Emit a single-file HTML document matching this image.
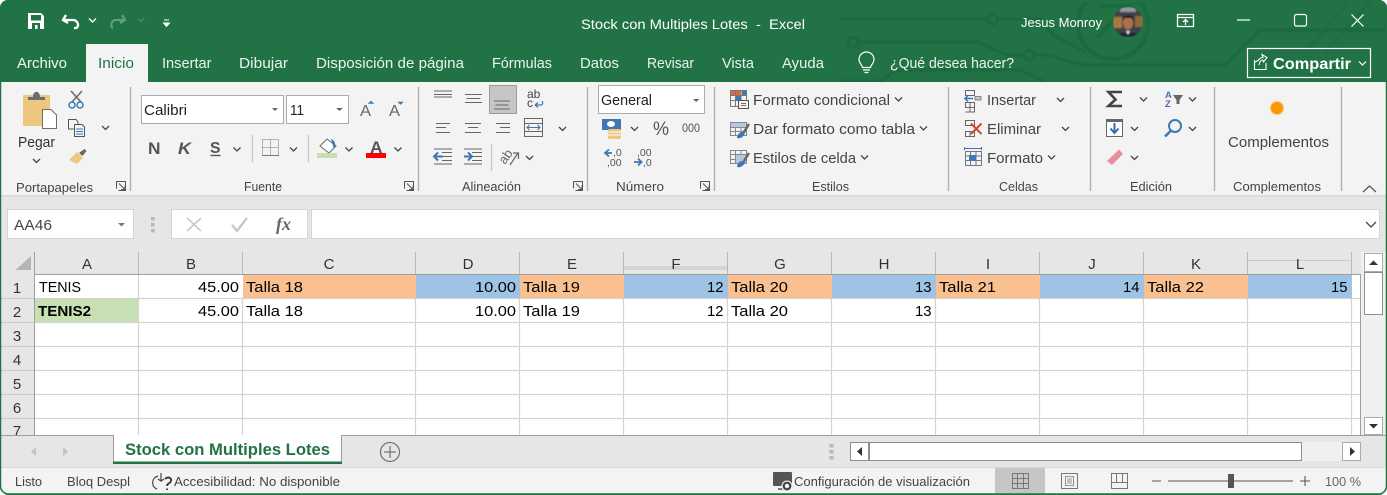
<!DOCTYPE html>
<html lang="es"><head><meta charset="utf-8"><title>Stock con Multiples Lotes - Excel</title>
<style>
html,body{margin:0;padding:0;background:#fff;width:1387px;height:495px;overflow:hidden}
svg{display:block;position:absolute;left:0;top:0}
text{font-family:"Liberation Sans",sans-serif;font-size:14px;fill:#333}
.w{fill:#fff}
.t{fill:#eaf3ee;font-size:14.7px}
.b{fill:#444;font-size:14.7px}
.g{fill:#444;font-size:13px}
.c{fill:#000;font-size:14.5px}
.h{fill:#333;font-size:15px;text-anchor:middle}
.s{fill:#444;font-size:13px}
.chev{fill:none;stroke:#444;stroke-width:1.3}
.sep{stroke:#b1b1b1;stroke-width:1.4}
.l{stroke:#666;stroke-width:1;fill:none}
.gl{stroke:#d4d4d4;stroke-width:1.2}
</style></head><body>
<svg width="1387" height="495" viewBox="0 0 1387 495" xmlns="http://www.w3.org/2000/svg">
<defs><clipPath id="win"><rect x="0" y="0" width="1387" height="495" rx="8"/></clipPath>
<clipPath id="av"><circle cx="1128" cy="22" r="15"/></clipPath>
<clipPath id="tb"><rect width="1387" height="82"/></clipPath>
<filter id="bl"><feGaussianBlur stdDeviation=".7"/></filter>
<filter id="bl2"><feGaussianBlur stdDeviation=".6"/></filter></defs>
<g clip-path="url(#win)">
<rect width="1387" height="495" fill="#217346"/>
<g clip-path="url(#tb)" fill="none" stroke="#1d6a40" stroke-width="3.200">
<path d="M840 19H988M998 19H1040L1053 35 1085 52M858 42H977L1007 55H1024M1034 55H1047L1083 65H1225L1260 30H1387M840 81H882L895 70H1020L1045 82"/>
<circle cx="993" cy="19" r="5"/><circle cx="853" cy="42" r="5"/><circle cx="1029" cy="55" r="5"/>
<circle cx="1113" cy="24" r="35" stroke-width="4.500"/><path d="M1100 6H1128L1098 37" stroke-width="4.500"/>
<path d="M1307 50 1350 0M1325 52 1372 0" opacity=".6"/>
</g>
<!-- quick access -->
<path d="M28 13H41L44 16V29H28Z" fill="#fff"/><rect x="31" y="15" width="10" height="5.500" fill="#217346"/><rect x="32" y="23" width="8" height="6" fill="#217346"/><rect x="35" y="25" width="2.500" height="4" fill="#fff"/>
<path d="M66 15 63 20 68 23M64 20H73C79 20 80 29 74 28" fill="none" stroke="#fff" stroke-width="2.300"/>
<path d="M89 18.500 92.500 22 96 18.500" fill="none" stroke="#fff" stroke-width="1.300"/>
<path d="M122 15 125 20 120 23M124 20H116C111 20 110 27 113 28" fill="none" stroke="#5f9d7c" stroke-width="2.300"/>
<path d="M138 18.500 141 21.500 144 18.500" fill="none" stroke="#4f9170" stroke-width="1.200"/>
<path d="M164 20H169M163.500 23H169.500L166.500 26.500Z" fill="#fff" stroke="#fff" stroke-width="1"/>
<text x="581" y="29" style="fill:#fff;font-size:13.500px" textLength="224" lengthAdjust="spacingAndGlyphs" xml:space="preserve">Stock con Multiples Lotes  -  Excel</text>
<text x="1021" y="27" style="fill:#fff;font-size:13px" textLength="81" lengthAdjust="spacingAndGlyphs">Jesus Monroy</text>
<g clip-path="url(#av)"><g filter="url(#bl)"><rect x="1113" y="7" width="30" height="30" fill="#3f4046"/><rect x="1113" y="17" width="9" height="11" fill="#a67c3e"/><rect x="1135" y="16" width="8" height="11" fill="#8f6a38"/><rect x="1120" y="7" width="16" height="5" fill="#8d98a3"/><ellipse cx="1128" cy="23" rx="5" ry="6.500" fill="#a9724e"/><path d="M1122 20C1122 14 1134 14 1134 20L1132 18H1124Z" fill="#151316"/><path d="M1116 37C1117 31 1139 31 1140 37Z" fill="#1a2338"/><path d="M1126 31H1130L1128 35Z" fill="#dfe3ea"/></g></g>
<path d="M1177.500 14.500H1193.500V26.500H1177.500ZM1177.500 17.500H1193.500" fill="none" stroke="#fff" stroke-width="1.300"/><path d="M1185.500 25V19.500M1183 22 1185.500 19.500 1188 22" fill="none" stroke="#fff" stroke-width="1.300"/>
<path d="M1237 20H1250" stroke="#fff" stroke-width="1.200"/>
<rect x="1294.500" y="14.500" width="12" height="11.500" rx="2" fill="none" stroke="#fff" stroke-width="1.200"/>
<path d="M1351.500 14.500 1363.500 26.500M1363.500 14.500 1351.500 26.500" stroke="#fff" stroke-width="1.200"/>
<!-- tabs -->
<rect x="86" y="44" width="62" height="38" fill="#f3f3f3"/>
<text x="17" y="68" class="t" style="fill:#f0f6f2" textLength="50" lengthAdjust="spacingAndGlyphs">Archivo</text>
<text x="98" y="68" class="t" style="fill:#217346" textLength="36" lengthAdjust="spacingAndGlyphs">Inicio</text>
<text x="162" y="68" class="t" textLength="49.500" lengthAdjust="spacingAndGlyphs">Insertar</text>
<text x="239" y="68" class="t" textLength="49" lengthAdjust="spacingAndGlyphs">Dibujar</text>
<text x="316" y="68" class="t" textLength="148" lengthAdjust="spacingAndGlyphs">Disposición de página</text>
<text x="492" y="68" class="t" textLength="60" lengthAdjust="spacingAndGlyphs">Fórmulas</text>
<text x="580" y="68" class="t" textLength="39" lengthAdjust="spacingAndGlyphs">Datos</text>
<text x="647" y="68" class="t" textLength="47" lengthAdjust="spacingAndGlyphs">Revisar</text>
<text x="722" y="68" class="t" textLength="32" lengthAdjust="spacingAndGlyphs">Vista</text>
<text x="782" y="68" class="t" textLength="42" lengthAdjust="spacingAndGlyphs">Ayuda</text>
<text x="890" y="68" class="t" textLength="124" lengthAdjust="spacingAndGlyphs">¿Qué desea hacer?</text>
<path d="M862.500 67.500C861.500 64 859 63 859 59.500A7.500 7.500 0 0 1 874 59.500C874 63 871.500 64 870.500 67.500ZM863 70H870M864.500 72.500H868.500" fill="none" stroke="#fff" stroke-width="1.200"/>
<rect x="1247.500" y="48.500" width="123" height="29" fill="none" stroke="#fff" stroke-width="1.200"/>
<path d="M1254.500 60V69.500H1266V63M1254.500 62.500 1258 60.500C1260 58 1262 57.500 1263 57.500L1262 54.500 1267 57.500 1263.500 62 1263 60C1261 60 1259.500 62 1259 65" fill="none" stroke="#fff" stroke-width="1.100"/>
<text x="1273" y="69" style="fill:#fff;font-size:16px;font-weight:700" textLength="78" lengthAdjust="spacingAndGlyphs">Compartir</text>
<path d="M1359 61.500 1362.500 65 1366 61.500" fill="none" stroke="#fff" stroke-width="1.200"/>

<!-- ribbon -->
<rect x="1" y="82" width="1385" height="114" fill="#f3f3f3"/>
<rect x="1" y="195" width="1385" height="2" fill="#dcdcdc"/>
<rect x="1" y="197" width="1385" height="238" fill="#e6e6e6"/>
<g class="sep"><path d="M130.500 87V191M418.500 87V191M587.500 87V191M714.500 87V191M948.500 87V191M1090.500 87V191M1214.500 87V191M1341.500 87V191"/></g>
<path d="M252.500 135V162M308.500 135V162M491.500 144V171" stroke="#c9c9c9" stroke-width="1.300"/>

<!-- clipboard -->
<rect x="23" y="95" width="27" height="31" rx="1" fill="#eec77f"/><path d="M28 97H33C33 90 40 90 40 97H45V100H28Z" fill="#6d6d6d"/>
<path d="M42.500 109.500H51L56.500 115V128.500H42.500Z" fill="#fff" stroke="#6d6d6d"/>
<text x="18" y="147" class="b" style="fill:#333;font-size:15px" textLength="37" lengthAdjust="spacingAndGlyphs">Pegar</text>
<path d="M33 159 36.500 162.500 40 159" class="chev"/>
<path d="M71 91 81 102M82 91 72 102" stroke="#6b6b6b" stroke-width="1.600" fill="none"/><circle cx="72" cy="105" r="3" fill="none" stroke="#3d78b4" stroke-width="1.500"/><circle cx="80" cy="105" r="3" fill="none" stroke="#3d78b4" stroke-width="1.500"/>
<path d="M68.500 119.500H76L78 122V129H68.500Z" fill="#f3f3f3" stroke="#555"/><path d="M74.500 124.500H82L84.500 127V136.500H74.500Z" fill="#f3f3f3" stroke="#555"/><path d="M76 129H83M76 131.500H83M76 134H83" stroke="#3d78b4"/>
<path d="M102 126 105.500 129.500 109 126" class="chev"/>
<path d="M69 160 77 152 83 158 77 164Z" fill="#eec77f"/><path d="M79 153 84.500 149 86.500 151 82.500 156Z" fill="#666"/>
<text x="16" y="192" class="g" textLength="77" lengthAdjust="spacingAndGlyphs">Portapapeles</text>
<path d="M116.500 188.500V181.500H125.500V190.500H118.500M119 183.500 125 189.500M121 189.500H125V185.500" fill="none" stroke="#555"/>

<!-- font -->
<rect x="141.500" y="95.500" width="142" height="28" fill="#fff" stroke="#ababab"/>
<rect x="286.500" y="95.500" width="62" height="28" fill="#fff" stroke="#ababab"/>
<text x="144" y="115" style="fill:#222;font-size:15px" textLength="43" lengthAdjust="spacingAndGlyphs">Calibri</text>
<text x="290" y="115" style="fill:#222;font-size:15px" textLength="14" lengthAdjust="spacingAndGlyphs">11</text>
<path d="M272 108H278L275 111ZM336 108H343L339.500 111Z" fill="#666"/>
<text x="360" y="116" style="fill:#666;font-size:16px" textLength="11" lengthAdjust="spacingAndGlyphs">A</text><path d="M368.500 103.500 371 101 373.500 103.500Z" fill="#3d78b4" stroke="#3d78b4" stroke-width=".6"/>
<text x="389" y="116" style="fill:#666;font-size:16px" textLength="11" lengthAdjust="spacingAndGlyphs">A</text><path d="M398 102H403L400.500 104.500Z" fill="#3d78b4" stroke="#3d78b4" stroke-width=".6"/>
<text x="148" y="154" style="fill:#555;font-size:17px;font-weight:700" textLength="12.500" lengthAdjust="spacingAndGlyphs">N</text>
<text x="178" y="154" style="fill:#555;font-size:17px;font-weight:700;font-style:italic" textLength="13" lengthAdjust="spacingAndGlyphs">K</text>
<text x="210" y="153" style="fill:#555;font-size:16px;font-weight:700" textLength="10.500" lengthAdjust="spacingAndGlyphs">S</text><path d="M210.500 155.500H220.500" stroke="#555" stroke-width="1.400"/>
<path d="M233.500 147.500 237 151 240.500 147.500M290 147.500 293.500 151 297 147.500M345.500 147.500 349 151 352.500 147.500M394.500 147.500 398 151 401.500 147.500" class="chev"/>
<path d="M262.500 139.500H278.500M262.500 139.500V155.500M278.500 139.500V155.500M262.500 147.500H278.500M270.500 139.500V155.500" fill="none" stroke="#777" stroke-width="1" stroke-dasharray="1 1"/><path d="M262 155.500H279" stroke="#777" stroke-width="1"/>
<path d="M320 146 327 139 336 146 329 153Z" fill="#fff" stroke="#666"/><path d="M331 139C336 141 336 146 334 149Z" fill="#3d78b4"/>
<rect x="317" y="153" width="20" height="5" fill="#c6e0b4"/>
<text x="370" y="153" style="fill:#555;font-size:17px;font-weight:700" textLength="12.500" lengthAdjust="spacingAndGlyphs">A</text>
<rect x="366" y="153" width="20" height="5" fill="#fe0000"/>
<text x="244" y="191" class="g" textLength="38" lengthAdjust="spacingAndGlyphs">Fuente</text>
<path d="M404.500 188.500V181.500H413.500V190.500H406.500M407 183.500 413 189.500M409 189.500H413V185.500" fill="none" stroke="#555"/>

<!-- alignment -->
<rect x="489.500" y="85.500" width="27" height="28" fill="#c6c6c6" stroke="#9c9c9c"/>
<g class="l"><path d="M434 91H452M434 94.500H452M434 97H452"/><path d="M465 94.500H482M466.500 98.500H480.500M465 102.500H482"/><path d="M494 101H510M495.500 105H508.500M494 109H510"/>
<path d="M436 123.500H450M436 127.500H446M436 132.500H450"/>
<path d="M465 123.500H481M468 127.500H478M465 132.500H481"/><path d="M496 123.500H510M500 127.500H510M496 132.500H510"/>
</g>
<text x="527" y="98" style="fill:#444;font-size:12px">ab</text><text x="527" y="107" style="fill:#444;font-size:12px">c</text><path d="M535 105H541C543 105 543 102 542 101M535 105 538 102.500M535 105 538 107.500" fill="none" stroke="#3d78b4" stroke-width="1.200"/>
<path d="M524.500 118.500H542.500V136.500H524.500ZM524.500 123.500H542.500M524.500 131.500H542.500" fill="none" stroke="#666"/><path d="M527 127.500H540M529.500 125 527 127.500 529.500 130M537.500 125 540 127.500 537.500 130" fill="none" stroke="#3d78b4" stroke-width="1.100"/>
<path d="M559 127 562.500 130.500 566 127M526 156 529.500 159.500 533 156" class="chev"/>
<path d="M442 152.500H452M442 156.500H452M442 160.500H452M434 164H452M434 149H452" class="l"/><path d="M434 156.500H443M438 152.500 434 156.500 438 160.500" fill="none" stroke="#3d78b4" stroke-width="2"/>
<path d="M472 152.500H482M472 156.500H482M472 160.500H482M464 164H482M464 149H482" class="l"/><path d="M464 156.500H472M468 152.500 472 156.500 468 160.500" fill="none" stroke="#3d78b4" stroke-width="2"/>
<text transform="translate(505 165) rotate(-55)" style="fill:#666;font-size:13px">ab</text><path d="M510 165 518 153M513 153H518.500V159" fill="none" stroke="#666" stroke-width="1.200"/>
<text x="462" y="191" class="g" textLength="59" lengthAdjust="spacingAndGlyphs">Alineación</text>
<path d="M573.500 188.500V181.500H582.500V190.500H575.500M576 183.500 582 189.500M578 189.500H582V185.500" fill="none" stroke="#555"/>

<!-- number -->
<rect x="598.500" y="85.500" width="106" height="28" fill="#fff" stroke="#ababab"/>
<text x="601" y="105" style="fill:#222;font-size:14.700px" textLength="51" lengthAdjust="spacingAndGlyphs">General</text>
<path d="M693 99H699.500L696.200 102Z" fill="#666"/>
<rect x="602" y="119" width="19" height="11" fill="#3d78b4"/><ellipse cx="611" cy="124" rx="4" ry="3" fill="#fff"/><rect x="608" y="129" width="13" height="10" rx="2" fill="#eec77f"/><path d="M608 132H621M608 135H621" stroke="#fff"/>
<path d="M631 127 634.500 130.500 638 127" class="chev"/>
<text x="653" y="135" style="fill:#555;font-size:19px" textLength="16" lengthAdjust="spacingAndGlyphs">%</text>
<text x="682" y="132" style="fill:#555;font-size:12px" textLength="18" lengthAdjust="spacingAndGlyphs">000</text>
<path d="M605 153H612M609 149.500 605 153 609 156.500" fill="none" stroke="#3d78b4" stroke-width="1.800"/>
<text x="613" y="156" style="fill:#555;font-size:10.500px">,0</text><text x="607" y="166" style="fill:#555;font-size:10.500px">,00</text>
<path d="M634 162H641M638 158.500 641.500 162 638 165.500" fill="none" stroke="#3d78b4" stroke-width="1.800"/>
<text x="637" y="156" style="fill:#555;font-size:10.500px">,00</text><text x="643" y="166" style="fill:#555;font-size:10.500px">,0</text>
<text x="616" y="191" class="g" textLength="48" lengthAdjust="spacingAndGlyphs">Número</text>
<path d="M700.500 188.500V181.500H709.500V190.500H702.500M703 183.500 709 189.500M705 189.500H709V185.500" fill="none" stroke="#555"/>

<!-- styles -->
<path d="M730.500 90.500H746.500V106.500H730.500ZM730.500 95.500H746.500M730.500 100.500H746.500M735.500 90.500V106.500M741 90.500V106.500" fill="none" stroke="#777"/>
<rect x="736" y="96" width="5" height="4" fill="#3d78b4"/><rect x="731" y="91" width="4" height="4" fill="#e0683c"/><rect x="736" y="91" width="5" height="4" fill="#e0683c"/><rect x="742" y="91" width="4" height="4" fill="#3d78b4"/>
<rect x="738.500" y="100.500" width="10" height="8" fill="#f3f3f3" stroke="#555"/><path d="M741 103.500H746M741 105.500H746" stroke="#444" stroke-width=".8"/>
<text x="753" y="105" class="b" textLength="137" lengthAdjust="spacingAndGlyphs">Formato condicional</text>
<path d="M895 97.500 898.500 101 902 97.500" class="chev"/>
<path d="M730.500 122.500H746.500V135.500H730.500ZM730.500 127.500H746.500M730.500 131.500H746.500M735.500 122.500V135.500M741 122.500V135.500" fill="none" stroke="#888"/><rect x="731" y="123" width="15" height="4" fill="#b4c8e0"/>
<path d="M744 132 749 124" stroke="#666" stroke-width="2.500"/><path d="M737 138C737 134 741 131 745 132 745 136 741 139 737 138Z" fill="#3d78b4"/>
<text x="753" y="134" class="b" textLength="162" lengthAdjust="spacingAndGlyphs">Dar formato como tabla</text>
<path d="M920 126.500 923.500 130 927 126.500" class="chev"/>
<path d="M730.500 150.500H746.500V163.500H730.500ZM730.500 154.500H746.500M730.500 159.500H746.500M735.500 150.500V163.500M741 150.500V163.500" fill="none" stroke="#888"/><rect x="736" y="155" width="10" height="8" fill="#b4c8e0"/>
<path d="M744 161 749 153" stroke="#666" stroke-width="2.500"/><path d="M737 167C737 163 741 160 745 161 745 165 741 168 737 167Z" fill="#3d78b4"/>
<text x="753" y="163" class="b" textLength="103" lengthAdjust="spacingAndGlyphs">Estilos de celda</text>
<path d="M861 155.500 864.500 159 868 155.500" class="chev"/>
<text x="812" y="191" class="g" textLength="37" lengthAdjust="spacingAndGlyphs">Estilos</text>

<!-- cells -->
<path d="M965.500 90.500H974.500V95.500H965.500ZM965.500 102.500H974.500V107.500H965.500ZM965.500 107.500H974.500V112H965.500M970 102.500V112" fill="none" stroke="#666"/><rect x="975" y="96.500" width="6" height="3.500" fill="#b4c8e0" stroke="#666" stroke-width=".7"/><path d="M965 98.500H973M968 95.500 965 98.500 968 101.500" fill="none" stroke="#3d78b4" stroke-width="1.500"/>
<text x="987" y="105" class="b" textLength="49" lengthAdjust="spacingAndGlyphs">Insertar</text>
<path d="M1057 98 1060.500 101.500 1064 98" class="chev"/>
<path d="M965.500 120.500H974.500V125.500H965.500ZM965.500 131.500H974.500V136.500H965.500ZM970 131.500V136.500" fill="none" stroke="#666"/><path d="M971 123.500 981.500 134M981.500 123.500 971 134" stroke="#d24726" stroke-width="2"/>
<text x="987" y="134" class="b" textLength="54" lengthAdjust="spacingAndGlyphs">Eliminar</text>
<path d="M1062 127 1065.500 130.500 1069 127" class="chev"/>
<path d="M965.500 151.500H981.500V165.500H965.500ZM965.500 156H981.500M965.500 160.500H981.500M970.500 151.500V165.500M976 151.500V165.500" fill="none" stroke="#777"/><rect x="969" y="155" width="7" height="6" fill="#3d78b4"/><path d="M964.500 148.500H981.500M964.500 147V150M981.500 147V150" stroke="#3d78b4"/>
<text x="987" y="163" class="b" textLength="56" lengthAdjust="spacingAndGlyphs">Formato</text>
<path d="M1048 155.500 1051.500 159 1055 155.500" class="chev"/>
<text x="999" y="191" class="g" textLength="39" lengthAdjust="spacingAndGlyphs">Celdas</text>

<!-- editing -->
<path d="M1122 92H1108.500L1115.500 99.500 1108.500 106H1122" fill="none" stroke="#444" stroke-width="2.600"/>
<path d="M1140 97.500 1143.500 101 1147 97.500M1189 97.500 1192.500 101 1196 97.500M1131 127 1134.500 130.500 1138 127M1189 127 1192.500 130.500 1196 127M1131 156 1134.500 159.500 1138 156" class="chev"/>
<text x="1165" y="98" style="fill:#3d78b4;font-size:9.500px;font-weight:700">A</text><text x="1165" y="107" style="fill:#7c4db0;font-size:9.500px;font-weight:700">Z</text><path d="M1173 95H1183L1179.500 100V104H1176.500V100Z" fill="#666"/>
<rect x="1106.500" y="119.500" width="16" height="17" fill="#fff" stroke="#666"/><rect x="1106" y="119" width="17" height="3" fill="#666"/><path d="M1114.500 123V133M1110.500 128.500 1114.500 133 1118.500 128.500" fill="none" stroke="#2f6db3" stroke-width="2"/>
<circle cx="1175" cy="126" r="6" fill="none" stroke="#3d78b4" stroke-width="2"/><path d="M1170.500 131 1165 136.500" stroke="#3d78b4" stroke-width="2.500"/>
<path d="M1107 161 1119 149.500 1123 154 1112 165Z" fill="#e88ea0"/>
<text x="1130" y="191" class="g" textLength="42" lengthAdjust="spacingAndGlyphs">Edición</text>

<!-- addins -->
<circle cx="1277" cy="108" r="6.500" fill="#fb9806" filter="url(#bl2)"/>
<text x="1228" y="147" class="b" textLength="101" lengthAdjust="spacingAndGlyphs">Complementos</text>
<text x="1233" y="191" class="g" textLength="88" lengthAdjust="spacingAndGlyphs">Complementos</text>
<path d="M1363 192 1369.500 186 1376 192" fill="none" stroke="#555" stroke-width="1.200"/>

<!-- formula bar -->
<rect x="7.500" y="209.500" width="126" height="29" fill="#fff" stroke="#d6d6d6"/>
<text x="14" y="230" style="fill:#444;font-size:15px" textLength="38" lengthAdjust="spacingAndGlyphs">AA46</text>
<path d="M118 223H125L121.500 226.500Z" fill="#777"/>
<rect x="151" y="217" width="3.500" height="3.500" fill="#b5b5b5"/><rect x="151" y="223" width="3.500" height="3.500" fill="#b5b5b5"/><rect x="151" y="229" width="3.500" height="3.500" fill="#b5b5b5"/>
<rect x="171.500" y="209.500" width="136" height="29" fill="#fff" stroke="#d6d6d6"/>
<rect x="311.500" y="209.500" width="1068" height="29" fill="#fff" stroke="#d6d6d6"/>
<path d="M187 218 201 231M201 218 187 231" stroke="#c8c8c8" stroke-width="1.600"/>
<path d="M232 225 237 231 247 218" fill="none" stroke="#c8c8c8" stroke-width="2.400"/>
<text x="276" y="230" style="fill:#666;font-size:18px;font-family:'Liberation Serif',serif;font-style:italic;font-weight:700">fx</text>
<path d="M1366 222 1371 227 1376 222" fill="none" stroke="#444" stroke-width="1.300"/>

<!-- sheet -->
<rect x="1" y="252" width="1360" height="22" fill="#e6e6e6"/>
<rect x="35" y="275" width="1325" height="160" fill="#fff"/>
<rect x="1" y="252" width="34" height="183" fill="#e6e6e6"/>
<path d="M31 256V270H15.500Z" fill="#b5b5b5"/>
<rect x="624" y="266" width="103.500" height="4" fill="#d4d4d4"/>
<rect x="1248" y="260" width="104" height="1" fill="#c8c8c8"/>
<!-- fills -->
<rect x="243" y="275" width="173" height="23" fill="#fac090"/>
<rect x="416" y="275" width="104" height="23" fill="#9dc3e6"/><rect x="520" y="275" width="104" height="23" fill="#fac090"/>
<rect x="624" y="275" width="104" height="23" fill="#9dc3e6"/><rect x="728" y="275" width="104" height="23" fill="#fac090"/>
<rect x="832" y="275" width="104" height="23" fill="#9dc3e6"/><rect x="936" y="275" width="104" height="23" fill="#fac090"/>
<rect x="1040" y="275" width="104" height="23" fill="#9dc3e6"/><rect x="1144" y="275" width="104" height="23" fill="#fac090"/>
<rect x="1248" y="275" width="104" height="23" fill="#9dc3e6"/>
<rect x="35" y="299" width="104" height="23" fill="#c6e0b4"/>
<!-- grid lines -->
<g class="gl"><path d="M35 298.500H1360M35 322.500H1360M35 346.500H1360M35 370.500H1360M35 394.500H1360M35 418.500H1360"/>
<path d="M138.500 275V435M242.500 298V435M415.500 298V435M519.500 298V435M623.500 298V435M727.500 298V435M831.500 298V435M935.500 298V435M1039.500 298V435M1143.500 298V435M1247.500 298V435M1351.500 298V435"/></g>
<path d="M1 322.500H35M1 346.500H35M1 370.500H35M1 394.500H35M1 418.500H35M1 298.500H35" stroke="#c9c9c9"/>
<path d="M34.500 252V435" stroke="#9e9e9e" stroke-width="1"/><path d="M35 274.500H1360.500" stroke="#9e9e9e"/>
<path d="M1360.500 274V435" stroke="#9e9e9e"/>
<path d="M138.500 252V274M242.500 252V274M415.500 252V274M519.500 252V274M623.500 252V274M727.500 252V274M831.500 252V274M935.500 252V274M1039.500 252V274M1143.500 252V274M1247.500 252V274M1351.500 252V274" stroke="#b9b9b9"/>
<g>
<text x="87" y="269" class="h">A</text><text x="191" y="269" class="h">B</text><text x="329" y="269" class="h">C</text><text x="468" y="269" class="h">D</text><text x="572" y="269" class="h">E</text><text x="676" y="269" class="h">F</text><text x="780" y="269" class="h">G</text><text x="884" y="269" class="h">H</text><text x="988" y="269" class="h">I</text><text x="1092" y="269" class="h">J</text><text x="1196" y="269" class="h">K</text><text x="1300" y="269" class="h">L</text>
<text x="17" y="293" class="h">1</text><text x="17" y="317" class="h">2</text><text x="17" y="341" class="h">3</text><text x="17" y="365" class="h">4</text><text x="17" y="389" class="h">5</text><text x="17" y="413" class="h">6</text><text x="17" y="436" class="h">7</text>
</g>
<g>
<text x="39" y="292" class="c" textLength="42" lengthAdjust="spacingAndGlyphs">TENIS</text>
<text x="198" y="292" class="c" textLength="41" lengthAdjust="spacingAndGlyphs">45.00</text>
<text x="246" y="292" class="c" textLength="57" lengthAdjust="spacingAndGlyphs">Talla 18</text>
<text x="475" y="292" class="c" textLength="41" lengthAdjust="spacingAndGlyphs">10.00</text>
<text x="523" y="292" class="c" textLength="57" lengthAdjust="spacingAndGlyphs">Talla 19</text>
<text x="707" y="292" class="c" textLength="16.500" lengthAdjust="spacingAndGlyphs">12</text>
<text x="731" y="292" class="c" textLength="57" lengthAdjust="spacingAndGlyphs">Talla 20</text>
<text x="915" y="292" class="c" textLength="16.500" lengthAdjust="spacingAndGlyphs">13</text>
<text x="939" y="292" class="c" textLength="57" lengthAdjust="spacingAndGlyphs">Talla 21</text>
<text x="1123" y="292" class="c" textLength="16.500" lengthAdjust="spacingAndGlyphs">14</text>
<text x="1147" y="292" class="c" textLength="57" lengthAdjust="spacingAndGlyphs">Talla 22</text>
<text x="1331" y="292" class="c" textLength="16.500" lengthAdjust="spacingAndGlyphs">15</text>
<text x="38" y="316" class="c" style="font-weight:700" textLength="53" lengthAdjust="spacingAndGlyphs">TENIS2</text>
<text x="198" y="316" class="c" textLength="41" lengthAdjust="spacingAndGlyphs">45.00</text>
<text x="246" y="316" class="c" textLength="57" lengthAdjust="spacingAndGlyphs">Talla 18</text>
<text x="475" y="316" class="c" textLength="41" lengthAdjust="spacingAndGlyphs">10.00</text>
<text x="523" y="316" class="c" textLength="57" lengthAdjust="spacingAndGlyphs">Talla 19</text>
<text x="707" y="316" class="c" textLength="16.500" lengthAdjust="spacingAndGlyphs">12</text>
<text x="731" y="316" class="c" textLength="57" lengthAdjust="spacingAndGlyphs">Talla 20</text>
<text x="915" y="316" class="c" textLength="16.500" lengthAdjust="spacingAndGlyphs">13</text>
</g>
<!-- v scroll -->
<rect x="1361" y="252" width="25" height="183" fill="#f0f0f0"/>
<rect x="1364.500" y="253.500" width="18" height="18" fill="#fff" stroke="#ababab"/><path d="M1369 265H1378L1373.500 260.500Z" fill="#333"/>
<rect x="1364.500" y="272.500" width="18" height="42" fill="#fff" stroke="#8e8e8e"/>
<rect x="1364.500" y="417.500" width="18" height="17" fill="#fff" stroke="#ababab"/><path d="M1369 424H1378L1373.500 428.500Z" fill="#333"/>
<!-- tab strip -->
<rect x="1" y="435" width="1385" height="33" fill="#e6e6e6"/>
<path d="M1 435.500H1386" stroke="#9e9e9e"/>
<path d="M36 447 31 451.500 36 456ZM63 447 68 451.500 63 456Z" fill="#c3c3c3"/>
<rect x="113" y="435" width="229" height="27" fill="#fff"/><path d="M113.500 435V462M341.500 435V462" stroke="#9e9e9e"/>
<rect x="113" y="461.500" width="229" height="2.500" fill="#217346"/>
<text x="125" y="455" style="fill:#217346;font-size:16.500px;font-weight:700" textLength="205" lengthAdjust="spacingAndGlyphs">Stock con Multiples Lotes</text>
<circle cx="390" cy="452" r="9.500" fill="none" stroke="#777" stroke-width="1.300"/><path d="M384 452H396M390 446V458" stroke="#777" stroke-width="1.300"/>
<rect x="829.500" y="444" width="4" height="3.500" fill="#b5b5b5"/><rect x="829.500" y="450" width="4" height="3.500" fill="#b5b5b5"/><rect x="829.500" y="456" width="4" height="3.500" fill="#b5b5b5"/>
<rect x="1302" y="442" width="40" height="19" fill="#f0f0f0"/>
<rect x="850.500" y="442.500" width="18" height="18" fill="#fff" stroke="#8e8e8e"/><path d="M862 447 857 451.500 862 456Z" fill="#333"/>
<rect x="869.500" y="442.500" width="432" height="18" fill="#fff" stroke="#8e8e8e"/>
<rect x="1342.500" y="442.500" width="18" height="18" fill="#fff" stroke="#ababab"/><path d="M1350 447 1355 451.500 1350 456Z" fill="#333"/>
<!-- status -->
<rect x="1" y="467" width="1385" height="27" fill="#f3f3f3"/><path d="M1 467.500H1386" stroke="#d6d6d6"/>
<text x="15" y="486" class="s" textLength="27" lengthAdjust="spacingAndGlyphs">Listo</text>
<text x="67" y="486" class="s" textLength="63" lengthAdjust="spacingAndGlyphs">Bloq Despl</text>
<path d="M158 476C151 478 151 487 157 489M161 473V481L158 479M161 481 164 479" fill="none" stroke="#444" stroke-width="1.200"/><path d="M165 479C168 476 172 478 171 481 170 484 167 483 167 486M167 488.500V490" fill="none" stroke="#333" stroke-width="1.800"/>
<text x="174" y="486" class="s" textLength="166" lengthAdjust="spacingAndGlyphs">Accesibilidad: No disponible</text>
<rect x="773" y="472" width="19" height="14" rx="1" fill="#555"/><path d="M778 489H787" stroke="#555" stroke-width="1.500"/><circle cx="787" cy="486" r="5.500" fill="#f3f3f3"/><circle cx="787" cy="486" r="3.300" fill="none" stroke="#444" stroke-width="2.200"/>
<text x="794" y="486" class="s" textLength="176" lengthAdjust="spacingAndGlyphs">Configuración de visualización</text>
<rect x="995" y="468" width="50" height="26" fill="#c6c6c6"/>
<path d="M1012.500 473.500H1028.500V488.500H1012.500ZM1012.500 478.500H1028.500M1012.500 483.500H1028.500M1017.500 473.500V488.500M1023.500 473.500V488.500" fill="none" stroke="#777"/>
<path d="M1061.500 473.500H1077.500V488.500H1061.500Z" fill="none" stroke="#777"/><path d="M1065.500 476.500H1073.500V485.500H1065.500ZM1067 479H1072M1067 481H1072M1067 483H1072" fill="none" stroke="#777" stroke-width=".8"/>
<path d="M1111.500 473.500H1127.500V488.500H1111.500ZM1111.500 482.500H1127.500M1116.500 473.500V482.500M1122.500 473.500V482.500" fill="none" stroke="#777"/>
<path d="M1152 481H1161M1168 481H1293M1300 481H1310M1305 476V486" stroke="#555" stroke-width="1.100"/>
<rect x="1228" y="474" width="6" height="14" fill="#555"/>
<text x="1325" y="486" class="s" style="fill:#666" textLength="36" lengthAdjust="spacingAndGlyphs">100 %</text>
</g>
<rect x="0.500" y="0.500" width="1386" height="493.500" rx="8" fill="none" stroke="#217346" stroke-width="1.500"/>
</svg>
</body></html>
